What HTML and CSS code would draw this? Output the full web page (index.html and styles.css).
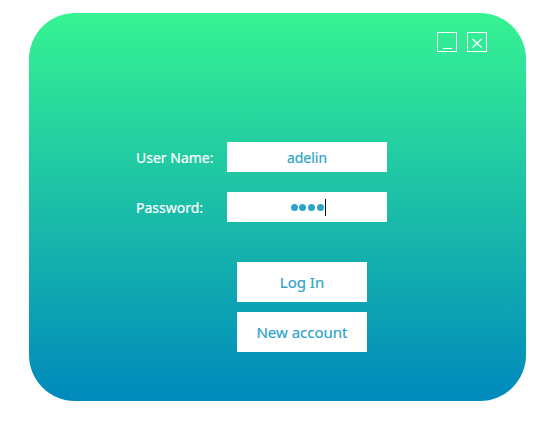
FILE: index.html
```html
<!DOCTYPE html>
<html>
<head>
<meta charset="utf-8">
<link rel="stylesheet" href="styles.css">
</head>
<body>
<div class="panel">
  <div class="titlebar">
    <div class="winbtn"><span class="minbar"></span></div>
    <div class="winbtn"><svg class="xicon" width="20" height="20" viewBox="0 0 20 20"><path d="M5.5 7 L14.5 15.5 M14.5 7 L5.5 15.5" stroke="#ffffff" stroke-width="1.3" fill="none"/></svg></div>
  </div>
  <div class="form">
    <div class="row">
      <div class="label">User Name:</div>
      <div class="field">adelin</div>
    </div>
    <div class="row">
      <div class="label">Password:</div>
      <div class="field pw"><span class="dot"></span><span class="dot"></span><span class="dot"></span><span class="dot"></span><span class="caret"></span></div>
    </div>
  </div>
  <div class="actions">
    <div class="btn">Log In</div>
    <div class="btn">New account</div>
  </div>
</div>
</body>
</html>
```
FILE: styles.css
```css
html, body {
  margin: 0;
  padding: 0;
  background: #ffffff;
}
body {
  font-family: "Noto Sans", "Open Sans", sans-serif;
}
.panel {
  margin: 13px 0 0 29px;
  width: 497px;
  height: 388px;
  border-radius: 46px;
  background: linear-gradient(to bottom, #36f392 0%, #0089bd 100%);
  display: flex;
  flex-direction: column;
  box-sizing: border-box;
  padding-top: 19px;
}
.titlebar {
  display: flex;
  justify-content: flex-end;
  gap: 10px;
  padding-right: 39px;
  height: 20px;
}
.winbtn {
  width: 20px;
  height: 20px;
  box-sizing: border-box;
  border: 1px solid #ffffff;
  position: relative;
}
.minbar {
  position: absolute;
  left: 5px;
  bottom: 2px;
  width: 9px;
  height: 1px;
  background: #ffffff;
}
.xicon {
  position: absolute;
  left: -1px;
  top: -1px;
}
.form {
  margin-top: 90px;
  margin-left: 107px;
  display: flex;
  flex-direction: column;
  gap: 20px;
}
.row {
  display: flex;
  align-items: center;
  height: 30px;
}
.label {
  width: 91px;
  color: #ffffff;
  font-size: 14px;
  -webkit-text-stroke: 0.2px #ffffff;
}
.field {
  width: 160px;
  height: 30px;
  background: #ffffff;
  color: #2ea3c9;
  font-size: 14px;
  -webkit-text-stroke: 0.2px #2ea3c9;
  display: flex;
  align-items: center;
  justify-content: center;
}
.pw {
  gap: 1.6px;
  padding-left: 3px;
  box-sizing: border-box;
}
.dot {
  width: 7px;
  height: 7px;
  border-radius: 50%;
  background: #2ea3c9;
}
.caret {
  width: 1px;
  height: 17px;
  background: #111111;
}
.actions {
  margin-top: 40px;
  margin-left: 208px;
  display: flex;
  flex-direction: column;
  gap: 10px;
}
.btn {
  width: 130px;
  height: 40px;
  background: #ffffff;
  color: #2ea3c9;
  font-size: 15px;
  -webkit-text-stroke: 0.2px #2ea3c9;
  display: flex;
  align-items: center;
  justify-content: center;
}
```
